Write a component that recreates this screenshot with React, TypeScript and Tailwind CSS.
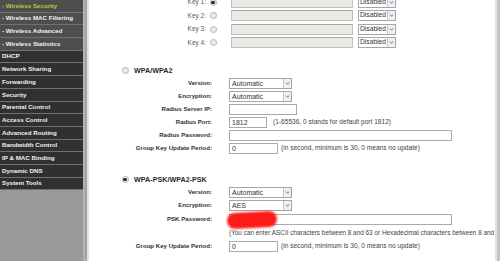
import type { ReactNode } from "react";

const menu = [
  { label: "- Wireless Security", sub: true, active: true },
  { label: "- Wireless MAC Filtering", sub: true },
  { label: "- Wireless Advanced", sub: true },
  { label: "- Wireless Statistics", sub: true },
  { label: "DHCP" },
  { label: "Network Sharing" },
  { label: "Forwarding" },
  { label: "Security" },
  { label: "Parental Control" },
  { label: "Access Control" },
  { label: "Advanced Routing" },
  { label: "Bandwidth Control" },
  { label: "IP & MAC Binding" },
  { label: "Dynamic DNS" },
  { label: "System Tools" },
];

function Radio({ checked }: { checked?: boolean }) {
  return (
    <span className="flex h-[7px] w-[7px] shrink-0 items-center justify-center rounded-full border border-[#b4b4b4] bg-[#ececec]">
      {checked && <span className="h-[3.5px] w-[3.5px] rounded-full bg-[#2a2a2a]" />}
    </span>
  );
}

function Chevron() {
  return (
    <svg viewBox="0 0 8 8" className="h-[5px] w-[5px]">
      <path d="M1.5 2.5 L4 5.2 L6.5 2.5" fill="none" stroke="#4d6185" strokeWidth="1.4" />
    </svg>
  );
}

function Select({ value, width }: { value: string; width: string }) {
  return (
    <div className={`flex h-[11px] items-stretch border border-[#a5a5a5] bg-white ${width}`}>
      <span className="flex flex-1 items-center pl-[2px] text-[7px] leading-none text-[#333]">{value}</span>
      <span className="flex w-[8px] items-center justify-center border-l border-[#c4c4c4] bg-[#eef0f3]">
        <Chevron />
      </span>
    </div>
  );
}

function Field({ value = "", width, disabled }: { value?: string; width: string; disabled?: boolean }) {
  return (
    <div
      className={`flex h-[11px] items-center border pl-[2px] text-[7px] leading-none text-[#333] ${width} ${
        disabled ? "border-[#c2c0bb] border-t-[#a9a7a2] bg-[#ebe9e5]" : "border-[#aaaaaa] bg-white"
      }`}
    >
      {value}
    </div>
  );
}

function Row({ label, h, children }: { label: string; h: string; children?: ReactNode }) {
  return (
    <div className={`flex items-center ${h}`}>
      <div className="w-[123px] shrink-0 text-right text-[6.1px] font-bold leading-none text-[#2f2f2f]">{label}</div>
      <div className="relative ml-[17px] flex items-center">{children}</div>
    </div>
  );
}

function Hint({ children, ml, size = "text-[6.6px]" }: { children: ReactNode; ml: string; size?: string }) {
  return <span className={`whitespace-nowrap leading-none text-[#444] ${size} ${ml}`}>{children}</span>;
}

function KeyRow({ n, checked }: { n: number; checked?: boolean }) {
  return (
    <div className="flex h-[13.5px] items-center">
      <div className="w-[117px] shrink-0 text-right text-[6.5px] leading-none text-[#5a5a5a]">Key {n}:</div>
      <span className="ml-[3.5px]">
        <Radio checked={checked} />
      </span>
      <span className="ml-[14.5px]">
        <Field width="w-[122px]" disabled />
      </span>
      <span className="ml-[5px]">
        <div className="flex h-[11px] w-[38px] items-stretch border border-[#a5a5a5] bg-white">
          <span className="flex flex-1 items-center pl-[1px] text-[6.7px] leading-none text-[#333]">Disabled</span>
          <span className="flex w-[8px] items-center justify-center border-l border-[#c4c4c4] bg-[#eef0f3]">
            <Chevron />
          </span>
        </div>
      </span>
    </div>
  );
}

function Heading({ title, checked }: { title: string; checked?: boolean }) {
  return (
    <div className="flex h-[13px] items-center pl-[32.5px]">
      <Radio checked={checked} />
      <span className="ml-[5.5px] text-[7.2px] font-bold leading-none text-[#2a2a2a]">{title}</span>
    </div>
  );
}

export default function App() {
  return (
    <div
      className="flex h-[261px] w-[500px] overflow-hidden bg-white"
      style={{ fontFamily: '"Liberation Sans", Arial, sans-serif' }}
    >
      <nav className="flex w-[83px] shrink-0 flex-col bg-[#9a9a9a]">
        {menu.map((item) => (
          <div
            key={item.label}
            className={`flex h-[12.7px] shrink-0 items-center border-b border-[#707070] pl-[2px] text-[6.2px] font-bold leading-none whitespace-nowrap ${
              item.sub ? "bg-[#4e4e4e]" : "bg-[#303030]"
            } ${item.active ? "text-[#a6cf3a]" : "text-[#f2f2f2]"}`}
          >
            {item.label}
          </div>
        ))}
      </nav>
      <div className="w-[2px] shrink-0 bg-[#b3b3b3]" />
      <div className="w-[2px] shrink-0 bg-[#a3a3a3]" />
      <div className="w-[2px] shrink-0 bg-[#e2e2e2]" />

      <main className="flex min-w-0 flex-1 flex-col overflow-hidden bg-white">
        <div className="mt-[-4.5px]">
          <KeyRow n={1} checked />
          <KeyRow n={2} />
          <KeyRow n={3} />
          <KeyRow n={4} />
        </div>

        <div className="mt-[14.5px]">
          <Heading title="WPA/WPA2" />
          <Row label="Version:" h="h-[13px]">
            <Select value="Automatic" width="w-[63px]" />
          </Row>
          <Row label="Encryption:" h="h-[13px]">
            <Select value="Automatic" width="w-[63px]" />
          </Row>
          <Row label="Radius Server IP:" h="h-[13px]">
            <Field width="w-[68px]" />
          </Row>
          <Row label="Radius Port:" h="h-[13px]">
            <Field value="1812" width="w-[38px]" />
            <Hint ml="ml-[6px]">(1-65536, 0 stands for default port 1812)</Hint>
          </Row>
          <Row label="Radius Password:" h="h-[13px]">
            <Field width="w-[223px]" />
          </Row>
          <Row label="Group Key Update Period:" h="h-[13px]">
            <Field value="0" width="w-[49px]" />
            <Hint ml="ml-[3px]">(in second, minimum is 30, 0 means no update)</Hint>
          </Row>
        </div>

        <div className="mt-[18px]">
          <Heading title="WPA-PSK/WPA2-PSK" checked />
          <Row label="Version:" h="h-[13px]">
            <Select value="Automatic" width="w-[63px]" />
          </Row>
          <Row label="Encryption:" h="h-[13px]">
            <Select value="AES" width="w-[63px]" />
          </Row>
          <Row label="PSK Password:" h="h-[15px]">
            <Field width="w-[223px]" />
            <span className="absolute left-[-2px] top-[-2.5px] h-[16px] w-[50px] -rotate-3 rounded-full bg-[#ff1a1a] blur-[1px]" />
          </Row>
          <div className="flex h-[12px] items-center pl-[140px]">
            <Hint ml="ml-0" size="text-[6.4px]">
              (You can enter ASCII characters between 8 and 63 or Hexadecimal characters between 8 and 64.)
            </Hint>
          </div>
          <Row label="Group Key Update Period:" h="h-[15px]">
            <Field value="0" width="w-[49px]" />
            <Hint ml="ml-[3px]">(in second, minimum is 30, 0 means no update)</Hint>
          </Row>
        </div>
      </main>

      <div className="w-[2px] shrink-0 bg-[#e4e4e4]" />
      <div className="w-[3px] shrink-0 bg-[#c6c6c6]" />
    </div>
  );
}
